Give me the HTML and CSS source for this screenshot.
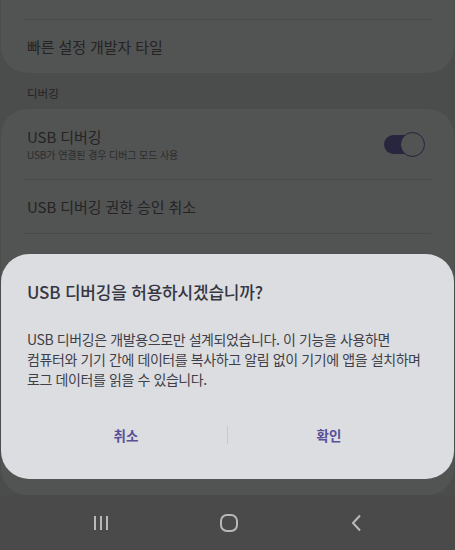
FILE: index.html
```html
<!DOCTYPE html>
<html lang="ko">
<head>
<meta charset="utf-8">
<link rel="stylesheet" href="styles.css">
</head>
<body>
<div class="screen">
  <div class="list">
    <section class="card card-top">
      <div class="row row-cut"><span class="title">기본 USB 설정</span></div>
      <div class="row"><span class="title">빠른 설정 개발자 타일</span></div>
    </section>
    <div class="section-label">디버깅</div>
    <section class="card card-debug">
      <div class="row row-two">
        <div class="texts">
          <span class="title">USB 디버깅</span>
          <span class="sub">USB가 연결된 경우 디버그 모드 사용</span>
        </div>
        <span class="toggle"><span class="track"></span><span class="thumb"></span></span>
      </div>
      <div class="row"><span class="title">USB 디버깅 권한 승인 취소</span></div>
      <div class="row"><span class="title">버그 신고 바로가기</span></div>
      <div class="row"><span class="title">모의 위치 앱 선택</span></div>
    </section>
  </div>
  <nav class="navbar">
    <svg class="nav-icon" width="20" height="20" viewBox="0 0 20 20"><path d="M4 3v14M10 3v14M16 3v14" stroke="#b9b9b9" stroke-width="2" fill="none"/></svg>
    <svg class="nav-icon" width="20" height="20" viewBox="0 0 20 20"><rect x="2" y="2" width="16" height="16" rx="6" stroke="#b9b9b9" stroke-width="2" fill="none"/></svg>
    <svg class="nav-icon" width="20" height="20" viewBox="0 0 20 20"><path d="M13 2.5L6 10l7 7.5" stroke="#b9b9b9" stroke-width="2" fill="none" stroke-linejoin="round"/></svg>
  </nav>
  <div class="dialog">
    <h2 class="dlg-title">USB 디버깅을 허용하시겠습니까?</h2>
    <p class="dlg-body">USB 디버깅은 개발용으로만 설계되었습니다. 이 기능을 사용하면<br>컴퓨터와 기기 간에 데이터를 복사하고 알림 없이 기기에 앱을 설치하며<br>로그 데이터를 읽을 수 있습니다.</p>
    <div class="dlg-buttons">
      <button class="dlg-btn">취소</button>
      <span class="dlg-sep"></span>
      <button class="dlg-btn">확인</button>
    </div>
  </div>
</div>
</body>
</html>
```
FILE: styles.css
```css
* { box-sizing: border-box; }
html, body {
  margin: 0;
  padding: 0;
  background: #4b4c4c;
  font-family: "Noto Sans CJK KR", "Noto Sans", Roboto, sans-serif;
}
.screen {
  position: relative;
  width: 455px;
  height: 550px;
  overflow: hidden;
  display: flex;
  flex-direction: column;
}
.list {
  height: 495px;
  display: flex;
  flex-direction: column;
  overflow: hidden;
}
.card {
  background: #525353;
  border-radius: 26px;
  margin: 0 1px;
  display: flex;
  flex-direction: column;
}
.card-top {
  margin-top: -36px;
  flex: none;
}
.card-debug {
  flex: 1;
}
.row {
  height: 54px;
  display: flex;
  align-items: center;
  padding: 0 26px;
  position: relative;
  flex: none;
}
.row + .row::before {
  content: "";
  position: absolute;
  top: 0;
  left: 23px;
  right: 23px;
  height: 1px;
  background: #484949;
}
.row-cut { height: 55px; }
.row-two {
  height: 70px;
  justify-content: space-between;
  padding-right: 29px;
}
.title {
  font-size: 15px;
  color: #232424;
  letter-spacing: -0.1px;
}
.texts {
  display: flex;
  flex-direction: column;
  padding-top: 0;
}
.texts .title { line-height: 20px; }
.sub {
  font-size: 10px;
  color: #2b2c2c;
  line-height: 15px;
  letter-spacing: -0.1px;
}
.section-label {
  height: 36px;
  display: flex;
  align-items: center;
  padding: 4px 27px 0;
  font-size: 11.5px;
  color: #232424;
}
.toggle {
  position: relative;
  width: 41px;
  height: 25px;
  display: block;
}
.track {
  position: absolute;
  left: 0;
  top: 3px;
  width: 30px;
  height: 19px;
  border-radius: 10px;
  background: #28253f;
}
.thumb {
  position: absolute;
  right: 0;
  top: 0;
  width: 25px;
  height: 25px;
  border-radius: 50%;
  background: #525353;
  border: 1.5px solid #26233a;
}
.navbar {
  height: 55px;
  display: flex;
  align-items: center;
  justify-content: space-between;
  padding: 0 88px 0 91px;
  background: #4a4a4b;
}
.nav-icon { display: block; }
.dialog {
  position: absolute;
  left: 1px;
  right: 1px;
  top: 254px;
  height: 225px;
  background: #dcdde1;
  border-radius: 28px;
  padding: 26px 0 0 0;
  display: flex;
  flex-direction: column;
}
.dlg-title {
  margin: 0;
  padding: 0 26px;
  font-size: 17px;
  line-height: 24px;
  font-weight: 500;
  color: #353642;
  letter-spacing: -0.2px;
}
.dlg-body {
  margin: 25px 0 0 0;
  padding: 0 26px;
  font-size: 14px;
  line-height: 20px;
  color: #3e3f48;
  letter-spacing: -0.4px;
}
.dlg-buttons {
  margin-top: 24px;
  display: flex;
  align-items: center;
  height: 44px;
  padding: 0 24px;
}
.dlg-btn {
  flex: 1;
  background: none;
  border: 0;
  font-family: inherit;
  font-size: 13.5px;
  font-weight: 700;
  color: #5a5098;
  padding: 0;
  height: 44px;
}
.dlg-sep {
  width: 1px;
  height: 18px;
  background: #c8c9ce;
}
```
